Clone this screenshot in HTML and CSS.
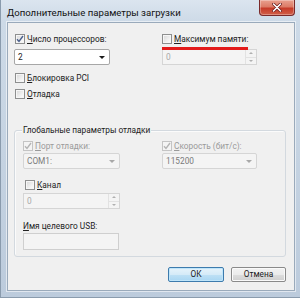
FILE: index.html
```html
<!DOCTYPE html>
<html lang="ru">
<head>
<meta charset="utf-8">
<title>Дополнительные параметры загрузки</title>
<link rel="stylesheet" href="styles.css">
</head>
<body>
<div class="window">
  <div class="titlebar">
    <span class="title">Дополнительные параметры загрузки</span>
    <button class="close" aria-label="Закрыть">
      <svg width="10" height="9" viewBox="0 0 10 9"><path d="M1.5 1 L8.5 8 M8.5 1 L1.5 8" stroke="#6b1d1d" stroke-width="3" stroke-linecap="round"/><path d="M1.5 1 L8.5 8 M8.5 1 L1.5 8" stroke="#ffffff" stroke-width="1.6" stroke-linecap="round"/></svg>
    </button>
  </div>
  <div class="client">
    <div class="top-grid">
      <label class="check"><span class="box checked"><svg width="8" height="8" viewBox="0 0 8 8"><path d="M1 4.2 L3 6.4 L7 1" fill="none" stroke="#4a5f8c" stroke-width="1.4"/></svg></span><span><u>Ч</u>исло процессоров:</span></label>
      <label class="check"><span class="box"></span><span><u>М</u>аксимум памяти:</span></label>
      <div class="combo"><span>2</span><span class="arrow"></span></div>
      <div class="spin disabled"><span class="val">0</span><span class="spinbtns"><span class="up"></span><span class="down"></span></span></div>
    </div>
    <label class="check first"><span class="box"></span><span><u>Б</u>локировка PCI</span></label>
    <label class="check first second"><span class="box"></span><span><u>О</u>тладка</span></label>

    <div class="group">
      <div class="group-title">Глобальные параметры отладки</div>
      <div class="group-grid">
        <label class="check disabled"><span class="box checked"><svg width="8" height="8" viewBox="0 0 8 8"><path d="M1 4.2 L3 6.4 L7 1" fill="none" stroke="#b4b4b4" stroke-width="1.4"/></svg></span><span><u>П</u>орт отладки:</span></label>
        <label class="check disabled"><span class="box checked"><svg width="8" height="8" viewBox="0 0 8 8"><path d="M1 4.2 L3 6.4 L7 1" fill="none" stroke="#b4b4b4" stroke-width="1.4"/></svg></span><span><u>С</u>корость (бит/с):</span></label>
        <div class="combo disabled com"><span>COM1:</span><span class="arrow"></span></div>
        <div class="combo disabled baud"><span>115200</span><span class="arrow"></span></div>
      </div>
      <label class="check channel"><span class="box"></span><span><u>К</u>анал</span></label>
      <div class="spin disabled chan"><span class="val">0</span><span class="spinbtns"><span class="up"></span><span class="down"></span></span></div>
      <div class="usb-label"><u>И</u>мя целевого USB:</div>
      <div class="textbox disabled"></div>
    </div>

    <div class="buttons">
      <button class="btn default">ОК</button>
      <button class="btn">Отмена</button>
    </div>
    <div class="redline"></div>
  </div>
</div>
</body>
</html>
```

FILE: styles.css
```css
* { box-sizing: border-box; }
html, body { margin: 0; padding: 0; }
body {
  width: 300px;
  height: 298px;
  overflow: hidden;
  font-family: Roboto, "Noto Sans", sans-serif;
  font-size: 8.3px;
  color: #222;
  background: #fff;
}
.window {
  width: 300px;
  height: 298px;
  display: flex;
  flex-direction: column;
  background: linear-gradient(180deg, #dbe5ef 0px, #cddae7 22px, #bccbdc 100%);
  border-left: 1px solid #8a9bad;
  border-bottom: 1px solid #8a9bad;
}
.titlebar {
  height: 22px;
  flex: none;
  display: flex;
  align-items: flex-start;
  padding-left: 6px;
}
.title {
  font-size: 9.6px;
  line-height: 12px;
  margin-top: 7px;
  color: #111;
}
.close {
  margin-left: auto;
  margin-right: 5px;
  width: 36px;
  height: 16px;
  padding: 0;
  border: 1px solid #7a2a2a;
  border-top: none;
  border-radius: 0 0 4px 4px;
  background: linear-gradient(180deg, #e9a08e 0%, #dc7b66 45%, #c63b28 55%, #d0604a 100%);
  display: flex;
  align-items: center;
  justify-content: center;
  box-shadow: inset 0 0 0 1px rgba(255,255,255,0.3);
}
.client {
  position: relative;
  flex: 1;
  margin: 0 5px 6px 6px;
  background: #f0f0f0;
  border: 1px solid #9aaabb;
  box-shadow: 0 0 0 1px rgba(255,255,255,0.55);
  padding: 10px 8px 0 6px;
  display: flex;
  flex-direction: column;
}
.client > * { flex: none; }
.top-grid {
  display: grid;
  grid-template-columns: 148px 95px;
  row-gap: 4px;
}
.check {
  height: 12px;
  line-height: 12px;
  display: flex;
  align-items: center;
  gap: 2px;
  white-space: nowrap;
}
.top-grid .check:first-child, .check.first { padding-left: 1px; }
.check.first { margin-top: 7px; }
.check.second { margin-top: 4px; }
.box {
  width: 10px;
  height: 10px;
  flex: none;
  border: 1px solid #8e8f8f;
  background: linear-gradient(135deg, #d6d6d6 0%, #f4f4f4 70%, #ffffff 100%);
  box-shadow: inset 0 0 0 1px #f6f6f6;
  display: flex;
  align-items: center;
  justify-content: center;
}
.check.disabled { color: #9a9a9a; }
.check.disabled .box {
  border-color: #c4c4c4;
  background: #f4f4f4;
  box-shadow: none;
}
u { text-decoration: underline; text-underline-offset: 1px; }

.combo {
  width: 96px;
  height: 16px;
  border: 1px solid #a7a7a7;
  border-radius: 2px;
  background: #ffffff;
  display: flex;
  align-items: center;
  justify-content: space-between;
  padding: 0 3px 0 3px;
}
.arrow {
  width: 0; height: 0;
  border-left: 3px solid transparent;
  border-right: 3px solid transparent;
  border-top: 3px solid #1a1a1a;
  margin-right: 1px;
}
.combo.disabled {
  background: #f4f4f4;
  border-color: #d5d5d5;
  color: #7a7a7a;
}
.combo.disabled .arrow { border-top-color: #a8a8a8; }

.spin {
  width: 95px;
  height: 16px;
  border: 1px solid #d5d5d5;
  background: #f4f4f4;
  display: flex;
  align-items: stretch;
  justify-content: space-between;
  color: #a8a8a8;
}
.spin .val { padding-left: 3px; line-height: 14px; }
.spinbtns {
  width: 11px;
  display: flex;
  flex-direction: column;
  border-left: 1px solid #e2e2e2;
}
.spinbtns span {
  flex: 1;
  display: flex;
  align-items: center;
  justify-content: center;
  border-bottom: 1px solid #e2e2e2;
}
.spinbtns span:last-child { border-bottom: none; }
.spinbtns .up::before {
  content: ""; border-left: 2px solid transparent; border-right: 2px solid transparent;
  border-bottom: 2px solid #b0b0b0;
}
.spinbtns .down::before {
  content: ""; border-left: 2px solid transparent; border-right: 2px solid transparent;
  border-top: 2px solid #b0b0b0;
}

.group {
  margin-top: 30px;
  width: 272px;
  padding: 0 8px 6px 8px;
  border: 1px solid #d3d9df;
  border-radius: 3px;
  box-shadow: inset 1px 1px 0 #fbfbfb;
  display: flex;
  flex-direction: column;
}
.group-title {
  align-self: flex-start;
  margin: -7px 0 0 -1px;
  padding: 0 1px;
  line-height: 12px;
  height: 12px;
  background: #f0f0f0;
  color: #1a1a1a;
}
.group-grid {
  margin-top: 4px;
  display: grid;
  grid-template-columns: 139px 95px;
  row-gap: 1px;
}
.combo.com { width: 97px; }
.combo.baud { width: 95px; }
.check.channel { margin-top: 10px; padding-left: 2px; }
.spin.chan { width: 97px; margin-top: 2px; }
.usb-label { margin-top: 11px; line-height: 12px; height: 12px; color: #222; }
.textbox {
  margin-top: 1px;
  width: 96px;
  height: 17px;
  border: 1px solid #cfcfcf;
  background: #f4f4f4;
}

.buttons {
  margin-top: 10px;
  display: flex;
  justify-content: flex-end;
  gap: 7px;
}
.btn {
  font-family: inherit;
  font-size: 8.3px;
  color: #1a1a1a;
  height: 15px;
  padding: 0;
  border-radius: 2px;
  line-height: 13px;
}
.btn.default {
  width: 56px;
  border: 1px solid #3d7bad;
  background: linear-gradient(180deg, #e6f3fb 0%, #d5ebf8 50%, #bfe1f5 51%, #a9d6f2 100%);
  box-shadow: inset 0 0 0 1px #bfe5fa;
}
.btn:not(.default) {
  width: 55px;
  border: 1px solid #8a8a8a;
  background: linear-gradient(180deg, #f2f2f2 0%, #ebebeb 50%, #dddddd 51%, #cfcfcf 100%);
  box-shadow: inset 0 0 0 1px #fafafa;
}
.redline {
  position: absolute;
  left: 154px;
  top: 24px;
  width: 86px;
  height: 3px;
  background: #e31b1b;
}
```
